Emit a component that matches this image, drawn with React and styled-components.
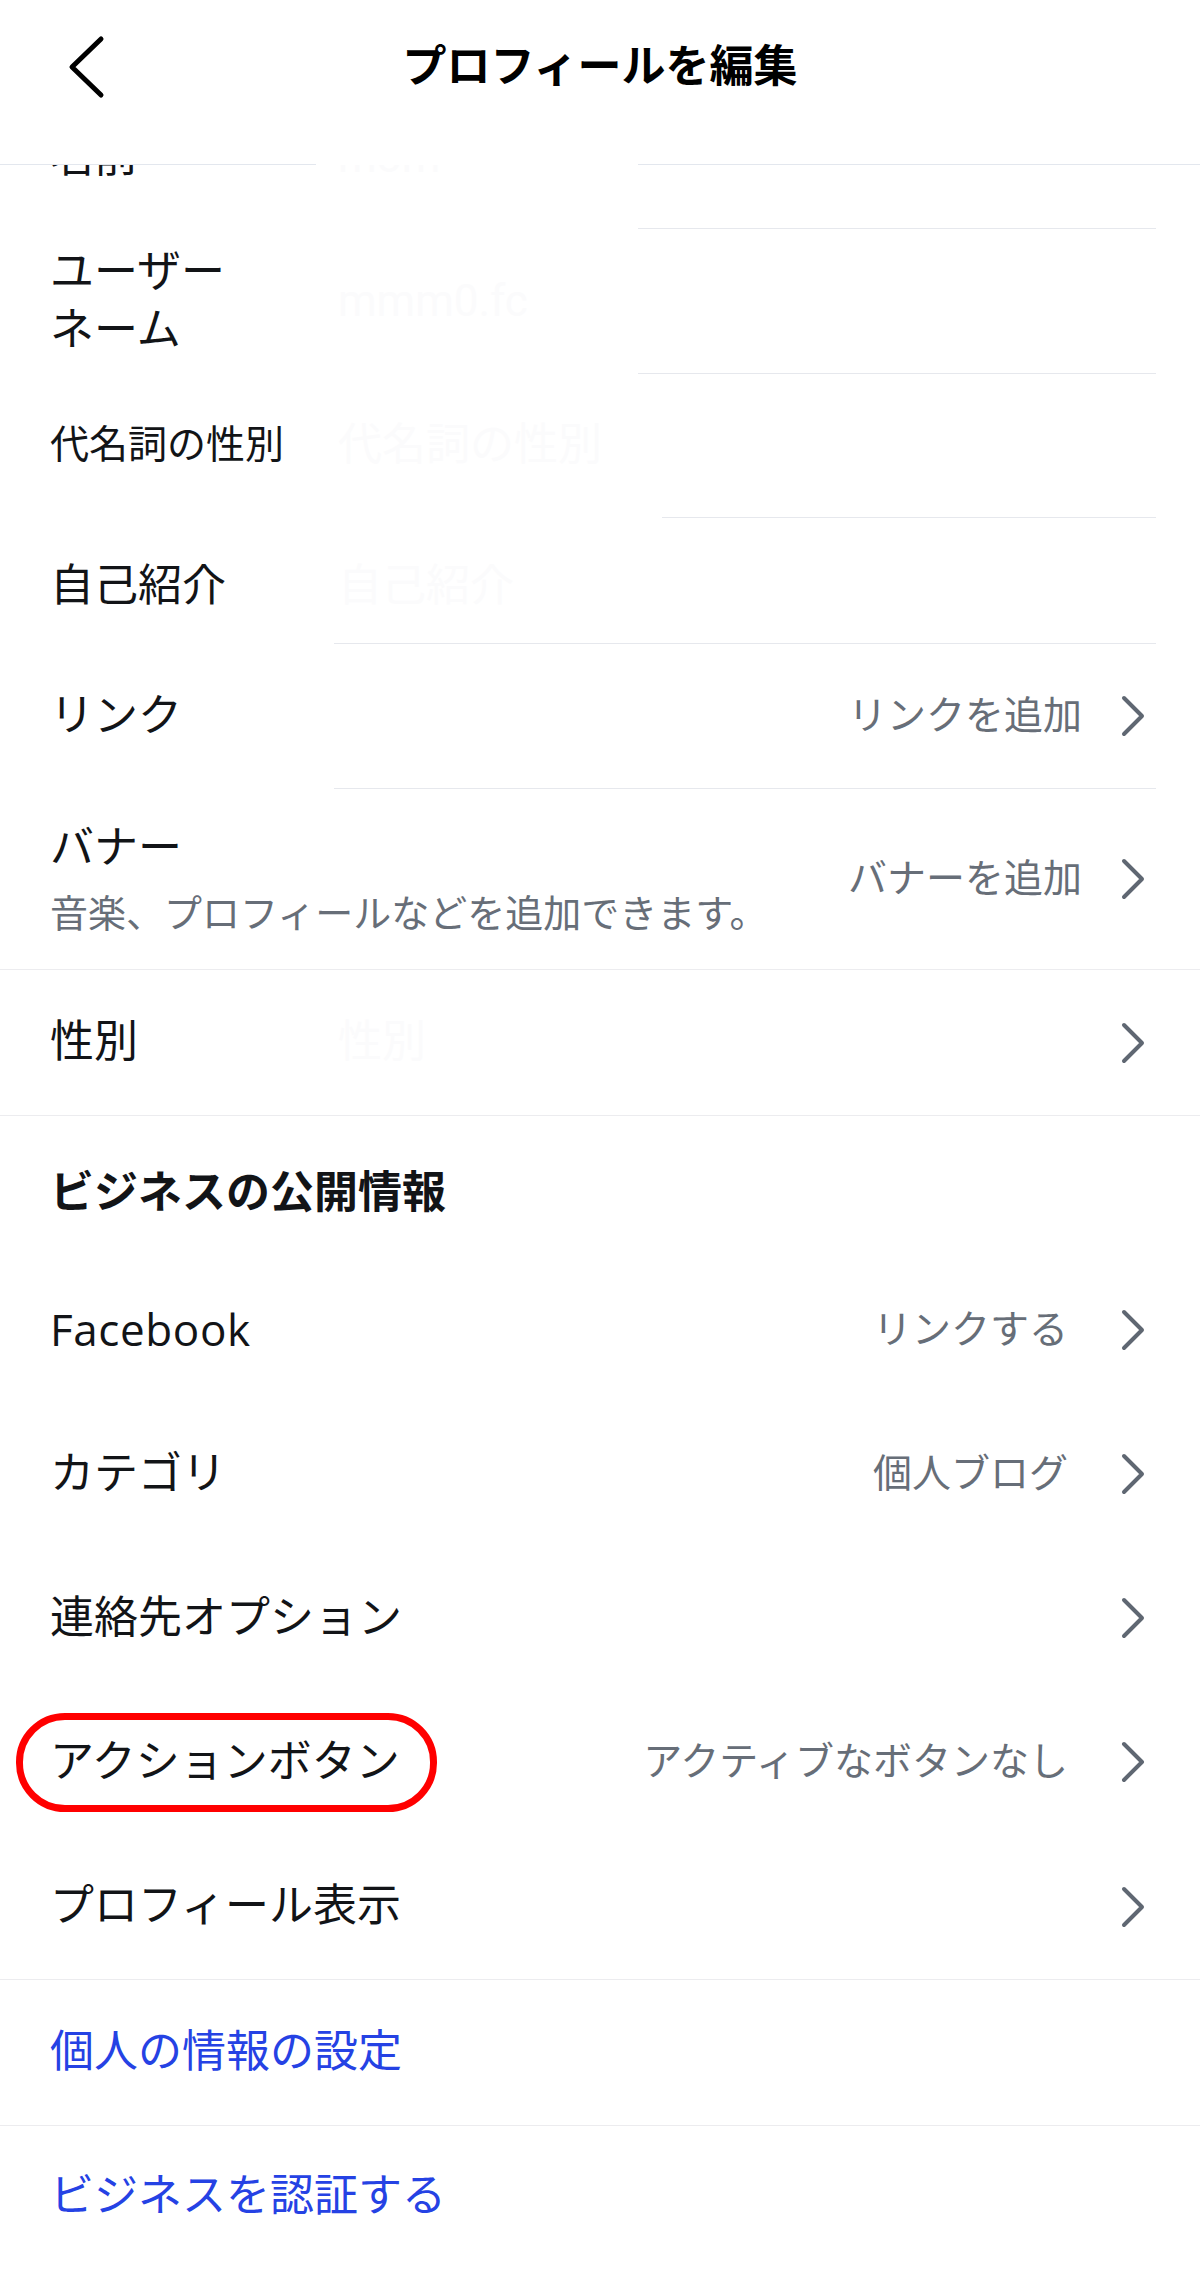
import React from 'react';
import styled, { createGlobalStyle } from 'styled-components';

const GlobalStyle = createGlobalStyle`
  * { box-sizing: border-box; }
  body {
    margin: 0;
    background: #ffffff;
    font-family: "Roboto", "Noto Sans CJK JP", sans-serif;
    color: #121417;
    -webkit-font-smoothing: antialiased;
  }
`;

const Page = styled.div`
  width: 1200px;
  min-height: 2287px;
  background: #ffffff;
  overflow: hidden;
`;

const Header = styled.header`
  height: 165px;
  display: flex;
  flex-direction: column;
`;

const TopBar = styled.div`
  height: 134px;
  display: grid;
  grid-template-columns: 1fr auto 1fr;
  align-items: center;
`;

const BackButton = styled.button`
  justify-self: start;
  margin-left: 67px;
  border: 0;
  padding: 0;
  background: none;
  display: flex;
`;

const Title = styled.h1`
  margin: 0;
  font-size: 44px;
  font-weight: 700;
  line-height: 58px;
  color: #000;
`;

const HeaderRule = styled.div`
  margin-top: auto;
  height: 1px;
  display: grid;
  grid-template-columns: 316px 322px 1fr;

  span:first-child,
  span:last-child {
    background: #e3e7ee;
  }
`;

const Row = styled.div`
  height: ${p => p.h || 144}px;
  display: flex;
  align-items: ${p => (p.top ? 'flex-start' : 'center')};
  padding: ${p => p.padTop || 0}px 54px 0 50px;
  overflow: hidden;
`;

const Label = styled.div`
  flex: ${p => (p.grow ? '1' : 'none')};
  width: ${p => (p.grow ? 'auto' : '288px')};
  font-size: ${p => p.size || 44}px;
  line-height: ${p => p.lh || 57}px;
  margin-top: ${p => p.shift || 0}px;
  white-space: nowrap;
  color: #121417;
`;

const Latin = styled.span`
  font-family: "Open Sans", "Noto Sans CJK JP", sans-serif;
  letter-spacing: 0.6px;
`;

const Ghost = styled.div`
  flex: 1;
  font-size: 44px;
  line-height: 57px;
  margin-top: ${p => p.shift || 0}px;
  color: #fbfbfc;
  white-space: nowrap;
`;

const Value = styled.div`
  margin-left: auto;
  margin-right: ${p => p.gap || 38}px;
  font-size: 39px;
  line-height: 50px;
  color: #676e78;
  white-space: nowrap;
`;

const Divider = styled.div`
  height: 1px;
  background: ${p => (p.inset ? '#e6e8ed' : '#ececef')};
  margin-left: ${p => p.inset || 0}px;
  margin-right: ${p => (p.inset ? 44 : 0)}px;
`;

const BannerText = styled.div`
  flex: 1;
  display: flex;
  flex-direction: column;
  gap: 11px;
`;

const BannerTitle = styled.div`
  font-size: 44px;
  line-height: 58px;
`;

const BannerSub = styled.div`
  font-size: 38px;
  line-height: 52px;
  color: #676e78;
  white-space: nowrap;
`;

const SectionTitle = styled.h2`
  margin: 0;
  height: 142px;
  display: flex;
  align-items: center;
  padding: 4px 50px 0;
  font-size: 44px;
  font-weight: 700;
  color: #121417;
`;

const Circled = styled.span`
  position: relative;
  display: inline-block;

  &::after {
    content: '';
    position: absolute;
    top: -21px;
    bottom: -21px;
    left: -34px;
    right: -37px;
    border: 7px solid #ff0000;
    border-radius: 49px;
  }
`;

const LinkRow = styled.a`
  height: ${p => p.h || 145}px;
  display: flex;
  align-items: center;
  padding: 0 50px;
  font-size: 44px;
  line-height: 57px;
  color: #2542e4;
  text-decoration: none;
`;

const Chevron = () => (
  <svg width="26" height="44" viewBox="0 0 26 44" fill="none">
    <path d="M4 4 L22 22 L4 40" stroke="#5f6772" strokeWidth="4" strokeLinecap="round" strokeLinejoin="round" />
  </svg>
);

const BackIcon = () => (
  <svg width="40" height="66" viewBox="0 0 40 66" fill="none">
    <path d="M34 5 L5 33 L34 61" stroke="#000" strokeWidth="5" strokeLinecap="round" strokeLinejoin="round" />
  </svg>
);

const businessRows = [
  { label: <Latin>Facebook</Latin>, key: 'fb', value: 'リンクする' },
  { label: 'カテゴリ', key: 'cat', value: '個人ブログ' },
  { label: '連絡先オプション', key: 'contact', value: '' },
  { label: 'アクションボタン', key: 'action', value: 'アクティブなボタンなし', circled: true },
  { label: 'プロフィール表示', key: 'display', value: '', h: 145 },
];

export default function App() {
  return (
    <Page>
      <GlobalStyle />
      <Header>
        <TopBar>
          <BackButton aria-label="戻る">
            <BackIcon />
          </BackButton>
          <Title>プロフィールを編集</Title>
          <span />
        </TopBar>
        <HeaderRule>
          <span />
          <span />
          <span />
        </HeaderRule>
      </Header>

      <Row h={63} top>
        <Label shift={-36}>名前</Label>
        <Ghost shift={-36}>mom</Ghost>
      </Row>
      <Divider inset={638} />

      <Row h={144}>
        <Label lh={58}>
          ユーザー
          <br />
          ネーム
        </Label>
        <Ghost>mmm0.fc</Ghost>
      </Row>
      <Divider inset={638} />

      <Row h={143}>
        <Label size={39}>代名詞の性別</Label>
        <Ghost>代名詞の性別</Ghost>
      </Row>
      <Divider inset={662} />

      <Row h={125} top padTop={40}>
        <Label>自己紹介</Label>
        <Ghost>自己紹介</Ghost>
      </Row>
      <Divider inset={334} />

      <Row h={144}>
        <Label>リンク</Label>
        <Value>リンクを追加</Value>
        <Chevron />
      </Row>
      <Divider inset={334} />

      <Row h={180}>
        <BannerText>
          <BannerTitle>バナー</BannerTitle>
          <BannerSub>音楽、プロフィールなどを追加できます。</BannerSub>
        </BannerText>
        <Value>バナーを追加</Value>
        <Chevron />
      </Row>
      <Divider />

      <Row h={145}>
        <Label>性別</Label>
        <Ghost>性別</Ghost>
        <Chevron />
      </Row>
      <Divider />

      <SectionTitle>ビジネスの公開情報</SectionTitle>

      {businessRows.map(item => (
        <Row key={item.key} h={item.h || 144}>
          <Label grow>{item.circled ? <Circled>{item.label}</Circled> : item.label}</Label>
          {item.value && <Value gap={52}>{item.value}</Value>}
          <Chevron />
        </Row>
      ))}
      <Divider />

      <LinkRow href="#">個人の情報の設定</LinkRow>
      <Divider />
      <LinkRow href="#" h={140}>ビジネスを認証する</LinkRow>
    </Page>
  );
}
